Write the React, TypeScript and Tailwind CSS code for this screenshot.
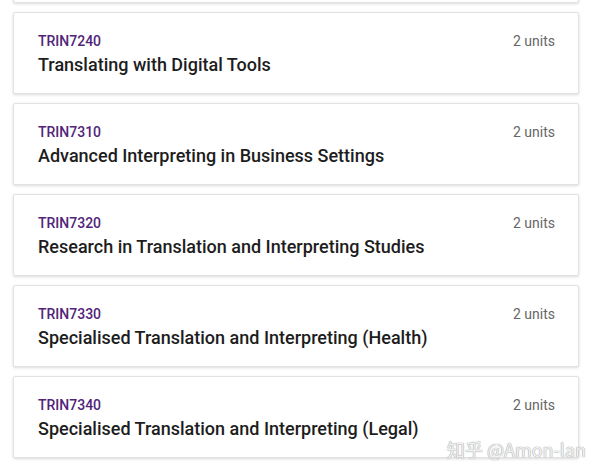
import React from "react";

const courses = [
  { code: "", title: "" },
  { code: "TRIN7240", title: "Translating with Digital Tools" },
  { code: "TRIN7310", title: "Advanced Interpreting in Business Settings" },
  { code: "TRIN7320", title: "Research in Translation and Interpreting Studies" },
  { code: "TRIN7330", title: "Specialised Translation and Interpreting (Health)" },
  { code: "TRIN7340", title: "Specialised Translation and Interpreting (Legal)" },
];

export default function App() {
  return (
    <div
      className="relative w-[600px] h-[473px] overflow-hidden bg-white"
      style={{ fontFamily: "Roboto, 'Noto Sans', sans-serif" }}
    >
      <div className="flex flex-col gap-[9px] pl-[13px] pr-[21px] -mt-[79px]">
        {courses.map((c, i) => (
          <div
            key={i}
            className="h-[82px] bg-white border border-[#e2e2e2] rounded-[2px] shadow-[0_1px_3px_rgba(0,0,0,0.15)] flex justify-between pl-[24px] pr-[23px] pt-[18px]"
          >
            {c.code && (
              <>
                <div className="flex flex-col gap-[2px]">
                  <div className="text-[14px] leading-[20px] font-medium text-[#51247a]">{c.code}</div>
                  <div className="text-[18px] leading-[24px] font-medium text-[#1d1d1d]">{c.title}</div>
                </div>
                <div className="text-[14px] leading-[20px] text-[#666666]">2 units</div>
              </>
            )}
          </div>
        ))}
      </div>
      <div
        className="absolute left-[447px] top-[437px] text-[18px] leading-[24px] text-[#f0f0f0] whitespace-nowrap"
        style={{
          fontFamily: "'Noto Sans CJK SC', Roboto, sans-serif",
          textShadow: "0 0 1px #a0a0a0, 0 0 1px #a0a0a0",
        }}
      >
        知乎 @Amon-lan
      </div>
    </div>
  );
}
